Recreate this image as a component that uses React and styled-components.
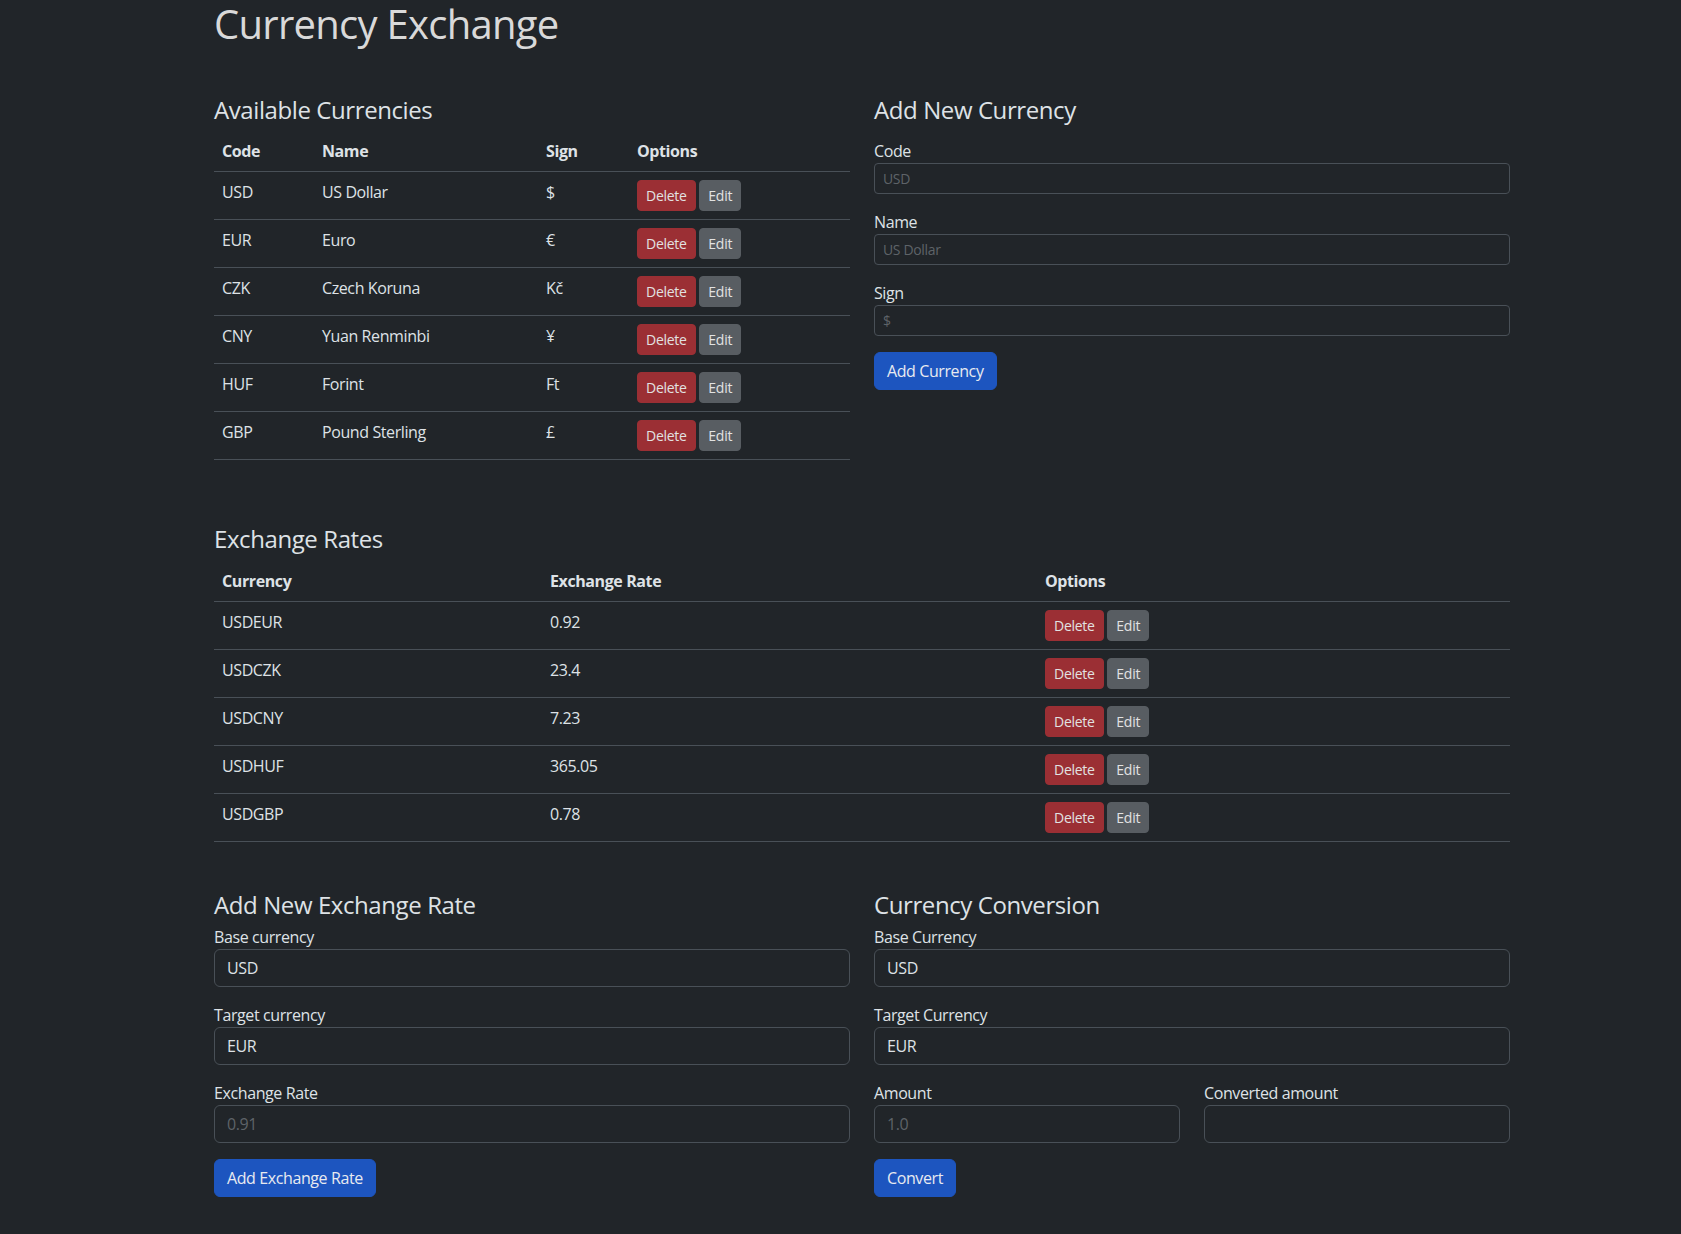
import { createGlobalStyle } from "styled-components";
import styled from "styled-components";

const currencies = [
  { code: "USD", name: "US Dollar", sign: "$" },
  { code: "EUR", name: "Euro", sign: "€" },
  { code: "CZK", name: "Czech Koruna", sign: "Kč" },
  { code: "CNY", name: "Yuan Renminbi", sign: "¥" },
  { code: "HUF", name: "Forint", sign: "Ft" },
  { code: "GBP", name: "Pound Sterling", sign: "£" },
];

const rates = [
  { pair: "USDEUR", rate: "0.92" },
  { pair: "USDCZK", rate: "23.4" },
  { pair: "USDCNY", rate: "7.23" },
  { pair: "USDHUF", rate: "365.05" },
  { pair: "USDGBP", rate: "0.78" },
];

const App = () => {
  return (
    <>
      <GlobalStyle />
      <Container>
        <Title>Currency Exchange</Title>

        <Row top="48px">
          <section>
            <Heading>Available Currencies</Heading>
            <Table>
              <thead>
                <tr>
                  <Th width="100px">Code</Th>
                  <Th width="224px">Name</Th>
                  <Th width="91px">Sign</Th>
                  <Th>Options</Th>
                </tr>
              </thead>
              <tbody>
                {currencies.map((c) => (
                  <tr key={c.code}>
                    <Td>{c.code}</Td>
                    <Td>{c.name}</Td>
                    <Td>{c.sign}</Td>
                    <Td>
                      <SmallBtn variant="danger">Delete</SmallBtn>{" "}
                      <SmallBtn variant="secondary">Edit</SmallBtn>
                    </Td>
                  </tr>
                ))}
              </tbody>
            </Table>
          </section>

          <section>
            <Heading>Add New Currency</Heading>
            <Form pad="8px">
              <Group>
                <Label>Code</Label>
                <SmallInput placeholder="USD" />
              </Group>
              <Group>
                <Label>Name</Label>
                <SmallInput placeholder="US Dollar" />
              </Group>
              <Group>
                <Label>Sign</Label>
                <SmallInput placeholder="$" />
              </Group>
              <PrimaryBtn type="button">Add Currency</PrimaryBtn>
            </Form>
          </section>
        </Row>

        <Block top="49px">
          <Heading gap="7px">Exchange Rates</Heading>
          <Table>
            <thead>
              <tr>
                <Th width="328px">Currency</Th>
                <Th width="495px">Exchange Rate</Th>
                <Th>Options</Th>
              </tr>
            </thead>
            <tbody>
              {rates.map((r) => (
                <tr key={r.pair}>
                  <Td>{r.pair}</Td>
                  <Td>{r.rate}</Td>
                  <Td>
                    <SmallBtn variant="danger">Delete</SmallBtn>{" "}
                    <SmallBtn variant="secondary">Edit</SmallBtn>
                  </Td>
                </tr>
              ))}
            </tbody>
          </Table>
        </Block>

        <Row top="49px">
          <section>
            <Heading>Add New Exchange Rate</Heading>
            <Form>
              <Group>
                <Label>Base currency</Label>
                <Input defaultValue="USD" />
              </Group>
              <Group>
                <Label>Target currency</Label>
                <Input defaultValue="EUR" />
              </Group>
              <Group>
                <Label>Exchange Rate</Label>
                <Input placeholder="0.91" />
              </Group>
              <PrimaryBtn type="button">Add Exchange Rate</PrimaryBtn>
            </Form>
          </section>

          <section>
            <Heading>Currency Conversion</Heading>
            <Form>
              <Group>
                <Label>Base Currency</Label>
                <Input defaultValue="USD" />
              </Group>
              <Group>
                <Label>Target Currency</Label>
                <Input defaultValue="EUR" />
              </Group>
              <Pair>
                <Group>
                  <Label>Amount</Label>
                  <Input placeholder="1.0" />
                </Group>
                <Group>
                  <Label>Converted amount</Label>
                  <Input readOnly />
                </Group>
              </Pair>
              <PrimaryBtn type="button">Convert</PrimaryBtn>
            </Form>
          </section>
        </Row>
      </Container>
    </>
  );
};
export default App;

const GlobalStyle = createGlobalStyle`
  *, *::before, *::after {
    box-sizing: border-box;
  }
  body {
    margin: 0;
    background: #212529;
    color: #dee2e6;
    font-family: "Open Sans", "Noto Sans", sans-serif;
    font-size: 16px;
    line-height: 1.5;
    letter-spacing: -0.025em;
  }
`;

const Container = styled.div`
  width: 1320px;
  margin-left: 202px;
  padding: 0 12px 40px;
`;

const Title = styled.h1`
  margin: 0;
  font-size: 40px;
  font-weight: 500;
  line-height: 1.2;
  letter-spacing: -0.018em;
  color: #d9d9d9;
`;

const Row = styled.div`
  display: grid;
  grid-template-columns: 1fr 1fr;
  column-gap: 24px;
  margin-top: ${(p) => p.top || "0"};
`;

const Block = styled.div`
  margin-top: ${(p) => p.top || "0"};
`;

const Heading = styled.h4`
  margin: 0 0 ${(p) => p.gap || "6px"};
  font-size: 24px;
  font-weight: 500;
  line-height: 1.2;
  letter-spacing: -0.017em;
  color: #dee2e6;
`;

const Table = styled.table`
  width: 100%;
  border-collapse: collapse;
  table-layout: fixed;
  margin-bottom: 16px;
  vertical-align: top;
`;

const Th = styled.th`
  width: ${(p) => p.width || "auto"};
  padding: 8px;
  text-align: left;
  font-weight: 700;
  border-bottom: 1px solid #495057;
`;

const Td = styled.td`
  padding: 8px;
  border-bottom: 1px solid #495057;
  vertical-align: top;
`;

const btnColors = {
  danger: "#9b2f34",
  secondary: "#585d62",
  primary: "#1d55bf",
};

const SmallBtn = styled.button`
  display: inline-block;
  padding: 4px 8px;
  font-family: inherit;
  font-size: 14px;
  line-height: 1.5;
  letter-spacing: -0.02em;
  color: #e2e2e2;
  background: ${(p) => btnColors[p.variant]};
  border: 1px solid ${(p) => btnColors[p.variant]};
  border-radius: 4px;
  cursor: pointer;
`;

const PrimaryBtn = styled.button`
  display: inline-block;
  padding: 6px 12px;
  font-family: inherit;
  font-size: 16px;
  line-height: 1.5;
  letter-spacing: -0.025em;
  color: #e8eaf0;
  background: ${btnColors.primary};
  border: 1px solid ${btnColors.primary};
  border-radius: 6px;
  cursor: pointer;
`;

const Form = styled.form`
  padding-top: ${(p) => p.pad || "0"};
`;

const Group = styled.div`
  margin-bottom: 16px;
`;

const Pair = styled.div`
  display: grid;
  grid-template-columns: 1fr 1fr;
  column-gap: 24px;
`;

const Label = styled.label`
  display: block;
  line-height: 24px;
`;

const Input = styled.input`
  display: block;
  width: 100%;
  padding: 6px 12px;
  font-family: inherit;
  font-size: 16px;
  line-height: 1.5;
  letter-spacing: -0.025em;
  color: #dee2e6;
  background: #212529;
  border: 1px solid #495057;
  border-radius: 6px;
  outline: none;
  &::placeholder {
    color: #5e6368;
  }
`;

const SmallInput = styled(Input)`
  padding: 4px 8px;
  font-size: 14px;
  border-radius: 4px;
`;
